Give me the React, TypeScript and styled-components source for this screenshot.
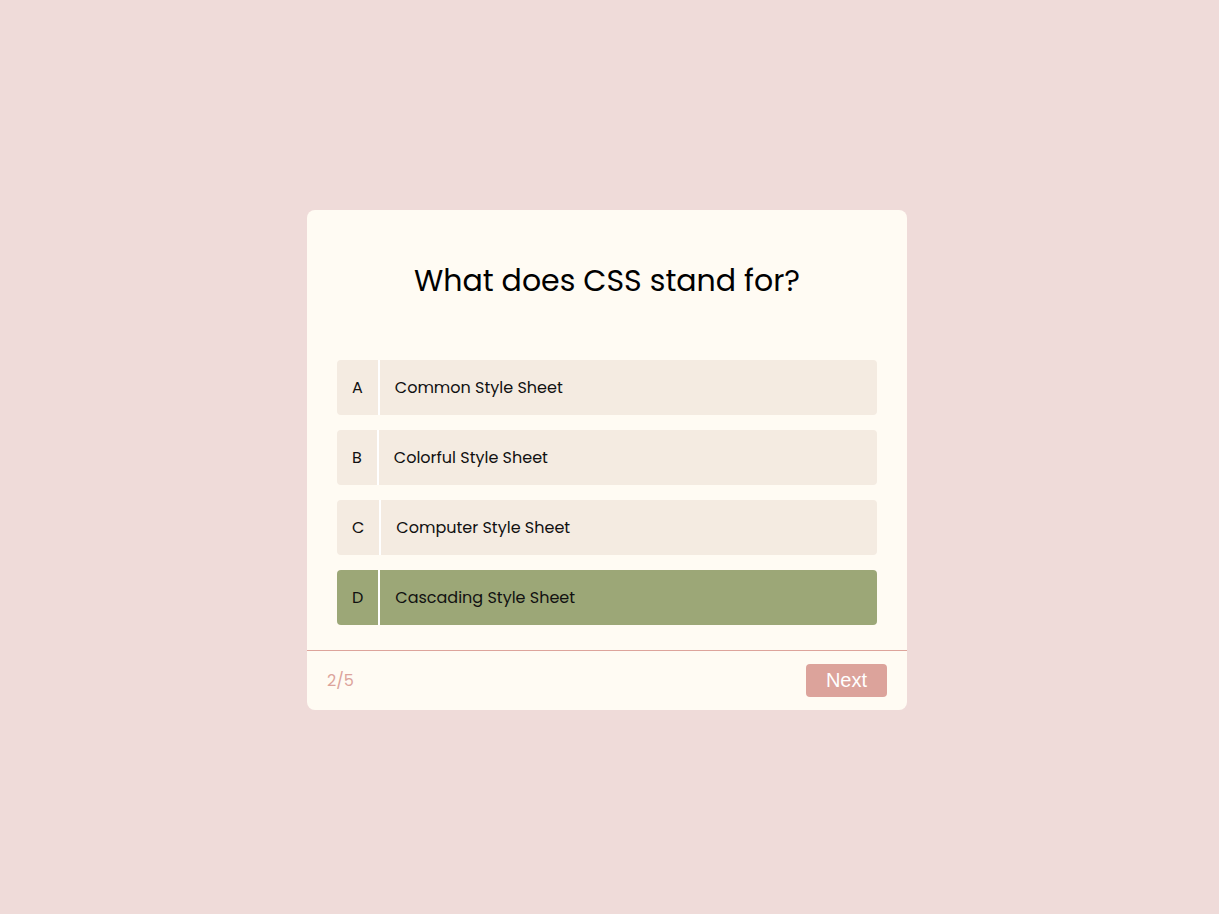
import React, { useState } from "react";
import styled, { createGlobalStyle } from "styled-components";

const GlobalStyle = createGlobalStyle`
  html, body { margin: 0; padding: 0; }
  body {
    background: #efdbd9;
    font-family: "Poppins", "Open Sans", "Noto Sans", sans-serif;
  }
`;

const Page = styled.div`
  min-height: 914px;
  display: flex;
  justify-content: center;
  padding: 210px 5px 0 0;
  box-sizing: border-box;
`;

const Card = styled.div`
  width: 600px;
  height: 500px;
  background: #fffbf3;
  border-radius: 8px;
  display: flex;
  flex-direction: column;
  box-sizing: border-box;
  overflow: hidden;
`;

const Body = styled.div`
  padding: 30px 30px 25px;
  display: flex;
  flex-direction: column;
`;

const Title = styled.h1`
  margin: 18px 0 57px;
  height: 45px;
  line-height: 45px;
  font-size: 30px;
  font-weight: 400;
  text-align: center;
  color: #000;
`;

const Options = styled.div`
  display: flex;
  flex-direction: column;
  gap: 15px;
`;

const Option = styled.div<{ $selected?: boolean }>`
  height: 55px;
  display: flex;
  align-items: stretch;
  border-radius: 4px;
  background: ${(p) => (p.$selected ? "#9ca777" : "#f4ebe1")};
  cursor: pointer;
  font-size: 16px;
  color: #111;
`;

const Letter = styled.span`
  display: flex;
  align-items: center;
  padding: 0 15px;
  border-right: 2px solid #ffffff;
`;

const Answer = styled.span`
  display: flex;
  align-items: center;
  padding-left: 15px;
`;

const Footer = styled.div`
  border-top: 1px solid #dda49b;
  height: 59px;
  display: flex;
  align-items: center;
  justify-content: space-between;
  padding: 0 20px;
`;

const Counter = styled.span`
  color: #dca39b;
  font-size: 16px;
`;

const NextButton = styled.button`
  height: 33px;
  padding: 0 20px;
  border: none;
  border-radius: 4px;
  background: #dca39b;
  color: #ffffff;
  font-family: "Liberation Sans", Arial, sans-serif;
  font-size: 20px;
  cursor: pointer;
`;

const options = [
  { key: "A", text: "Common Style Sheet" },
  { key: "B", text: "Colorful Style Sheet" },
  { key: "C", text: "Computer Style Sheet" },
  { key: "D", text: "Cascading Style Sheet" },
];

export default function App() {
  const [selected, setSelected] = useState("D");
  return (
    <>
      <GlobalStyle />
      <Page>
        <Card>
          <Body>
            <Title>What does CSS stand for?</Title>
            <Options>
              {options.map((o) => (
                <Option key={o.key} $selected={selected === o.key} onClick={() => setSelected(o.key)}>
                  <Letter>{o.key}</Letter>
                  <Answer>{o.text}</Answer>
                </Option>
              ))}
            </Options>
          </Body>
          <Footer>
            <Counter>2/5</Counter>
            <NextButton>Next</NextButton>
          </Footer>
        </Card>
      </Page>
    </>
  );
}
